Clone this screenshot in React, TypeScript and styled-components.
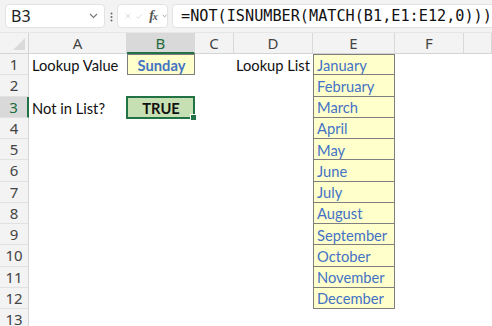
import styled, { createGlobalStyle } from "styled-components"

const GlobalStyle = createGlobalStyle`
  html, body {
    margin: 0;
    padding: 0;
    background: #ffffff;
    overflow: hidden;
  }
  body {
    width: 492px;
    height: 326px;
  }
`

const COLS = ["A", "B", "C", "D", "E", "F", ""]
const MONTHS = [
  "January",
  "February",
  "March",
  "April",
  "May",
  "June",
  "July",
  "August",
  "September",
  "October",
  "November",
  "December",
]

const Window = styled.div`
  width: 492px;
  height: 326px;
  overflow: hidden;
  display: flex;
  flex-direction: column;
  background: #ffffff;
`

const TopBar = styled.div`
  height: 33px;
  flex: none;
  display: flex;
  align-items: flex-start;
  padding: 4px 0 0 5px;
  box-sizing: border-box;
  background: #f3f3f3;
  border-bottom: 1px solid #e6e6e6;
`

const Box = styled.div<{ $w?: number }>`
  height: 24px;
  box-sizing: border-box;
  background: #ffffff;
  border: 1px solid #e3e3e3;
  border-radius: 4px;
  display: flex;
  align-items: center;
  ${(p) => (p.$w ? `width: ${p.$w}px; flex: none;` : "flex: 1;")}
`

const NameBox = styled(Box)`
  justify-content: space-between;
  padding: 0 6px 0 5px;
  font-family: "Noto Sans", "Open Sans", sans-serif;
  font-size: 16px;
  color: #222;
`

const Grip = styled.div`
  width: 12px;
  flex: none;
  display: flex;
  justify-content: center;
  padding-top: 8px;
`

const FxBox = styled(Box)`
  gap: 5px;
  padding: 0 0 0 7px;
  margin-right: 4px;
`

const FxLabel = styled.span`
  font-family: "Liberation Serif", serif;
  font-style: italic;
  font-weight: bold;
  font-size: 14px;
  color: #555;
  letter-spacing: -1px;
  margin-left: 2px;

  small {
    font-size: 10px;
  }
`

const FormulaBox = styled(Box)`
  border-right: none;
  border-radius: 4px 0 0 4px;
  padding-left: 8px;
  font-family: "DejaVu Sans Mono", "Liberation Mono", monospace;
  font-size: 15.2px;
  color: #111;
  white-space: nowrap;
  overflow: hidden;
`

const Sheet = styled.div`
  display: grid;
  grid-template-columns: 29px 98px 68px 39px 79px 82px 69px 1fr;
  grid-template-rows: 21px repeat(13, 21.25px);
  font-family: "Lato", "Liberation Sans", sans-serif;
  font-size: 14.7px;
`

const Corner = styled.div`
  position: relative;
  background: #f3f3f3;
  border-right: 1px solid #d4d4d4;
  border-bottom: 1px solid #d4d4d4;

  &::after {
    content: "";
    position: absolute;
    right: 3px;
    bottom: 3px;
    border-style: solid;
    border-width: 0 0 12px 12px;
    border-color: transparent transparent #dadada transparent;
  }
`

const ColHead = styled.div<{ $active?: boolean }>`
  display: flex;
  align-items: center;
  justify-content: center;
  background: ${(p) => (p.$active ? "#d9d9d9" : "#f3f3f3")};
  color: ${(p) => (p.$active ? "#1e6b3c" : "#444")};
  font-family: "Noto Sans", "Open Sans", sans-serif;
  font-size: 15px;
  border-right: 1px solid #d9d9d9;
  border-bottom: ${(p) => (p.$active ? "2px solid #217346" : "1px solid #d4d4d4")};
  box-sizing: border-box;
`

const RowHead = styled.div<{ $active?: boolean }>`
  display: flex;
  align-items: center;
  justify-content: center;
  background: ${(p) => (p.$active ? "#d9d9d9" : "#f3f3f3")};
  color: ${(p) => (p.$active ? "#1e6b3c" : "#444")};
  font-family: "Noto Sans", "Open Sans", sans-serif;
  font-size: 15px;
  border-bottom: 1px solid #e1e1e1;
  border-right: ${(p) => (p.$active ? "2px solid #217346" : "1px solid #d4d4d4")};
  box-sizing: border-box;
`

const Cell = styled.div<{
  $fill?: string
  $color?: string
  $bold?: boolean
  $center?: boolean
  $boxed?: boolean
  $top?: boolean
}>`
  position: relative;
  display: flex;
  align-items: center;
  justify-content: ${(p) => (p.$center ? "center" : "flex-start")};
  padding: 1px 2px 0 3px;
  box-sizing: border-box;
  white-space: nowrap;
  overflow: visible;
  background: ${(p) => p.$fill ?? "transparent"};
  color: ${(p) => p.$color ?? "#111"};
  font-weight: ${(p) => (p.$bold ? 700 : 400)};
  ${(p) =>
    p.$boxed
      ? `border-left: 1px solid #7f7f7f; border-right: 1px solid #7f7f7f; border-bottom: 1px solid #7f7f7f;`
      : ""}
  ${(p) => (p.$top ? "border-top: 1px solid #7f7f7f;" : "")}
`

const OverflowCell = styled(Cell)`
  padding-left: 2px;
`

const Selected = styled(Cell)`
  border: 2px solid #217346;
  margin: -1px 0 -1px -1px;
`

const FillHandle = styled.span`
  position: absolute;
  right: -4px;
  bottom: -4px;
  width: 5px;
  height: 5px;
  background: #217346;
  border: 1px solid #ffffff;
`

function Chevron() {
  return (
    <svg width="9" height="6" viewBox="0 0 9 6">
      <path d="M1 1l3.5 3.5L8 1" fill="none" stroke="#777" strokeWidth="1.1" />
    </svg>
  )
}

function TopControls() {
  return (
    <TopBar>
      <NameBox $w={100}>
        <span>B3</span>
        <Chevron />
      </NameBox>
      <Grip>
        <svg width="3" height="10" viewBox="0 0 3 10">
          <circle cx="1.5" cy="1.5" r="1" fill="#666" />
          <circle cx="1.5" cy="5" r="1" fill="#666" />
          <circle cx="1.5" cy="8.5" r="1" fill="#666" />
        </svg>
      </Grip>
      <FxBox $w={51}>
        <svg width="10" height="10" viewBox="0 0 10 10">
          <path d="M1 1l8 8M9 1l-8 8" stroke="#c4c4c4" strokeWidth="1.1" />
        </svg>
        <svg width="11" height="9" viewBox="0 0 11 9">
          <path d="M1 4.5l3 3L10 1" fill="none" stroke="#c4c4c4" strokeWidth="1.1" />
        </svg>
        <FxLabel>
          f<small>x</small>
        </FxLabel>
        <Chevron />
      </FxBox>
      <FormulaBox>=NOT(ISNUMBER(MATCH(B1,E1:E12,0)))</FormulaBox>
    </TopBar>
  )
}

export default function App() {
  const rows = Array.from({ length: 13 }, (_, i) => i + 1)

  function renderCell(row: number, col: string) {
    const key = `${col}${row}`
    if (col === "A" && row === 1) return <Cell key={key}>Lookup Value</Cell>
    if (col === "A" && row === 3) return <Cell key={key}>Not in List?</Cell>
    if (col === "B" && row === 1)
      return (
        <Cell key={key} $fill="#ffffcc" $color="#4472c4" $bold $center $boxed $top>
          Sunday
        </Cell>
      )
    if (col === "B" && row === 3)
      return (
        <Selected key={key} $fill="#c6e0b4" $bold $center>
          TRUE
          <FillHandle />
        </Selected>
      )
    if (col === "D" && row === 1) return <OverflowCell key={key}>Lookup List</OverflowCell>
    if (col === "E" && row <= 12)
      return (
        <Cell key={key} $fill="#ffffcc" $color="#4472c4" $boxed $top={row === 1}>
          {MONTHS[row - 1]}
        </Cell>
      )
    return <Cell key={key} />
  }

  return (
    <Window>
      <GlobalStyle />
      <TopControls />
      <Sheet>
        <Corner />
        {COLS.map((c, i) => (
          <ColHead key={`h${i}`} $active={c === "B"}>
            {c}
          </ColHead>
        ))}
        {rows.map((r) => [
          <RowHead key={`r${r}`} $active={r === 3}>
            {r}
          </RowHead>,
          ...COLS.map((c, i) => renderCell(r, c || `X${i}`)),
        ])}
      </Sheet>
    </Window>
  )
}
